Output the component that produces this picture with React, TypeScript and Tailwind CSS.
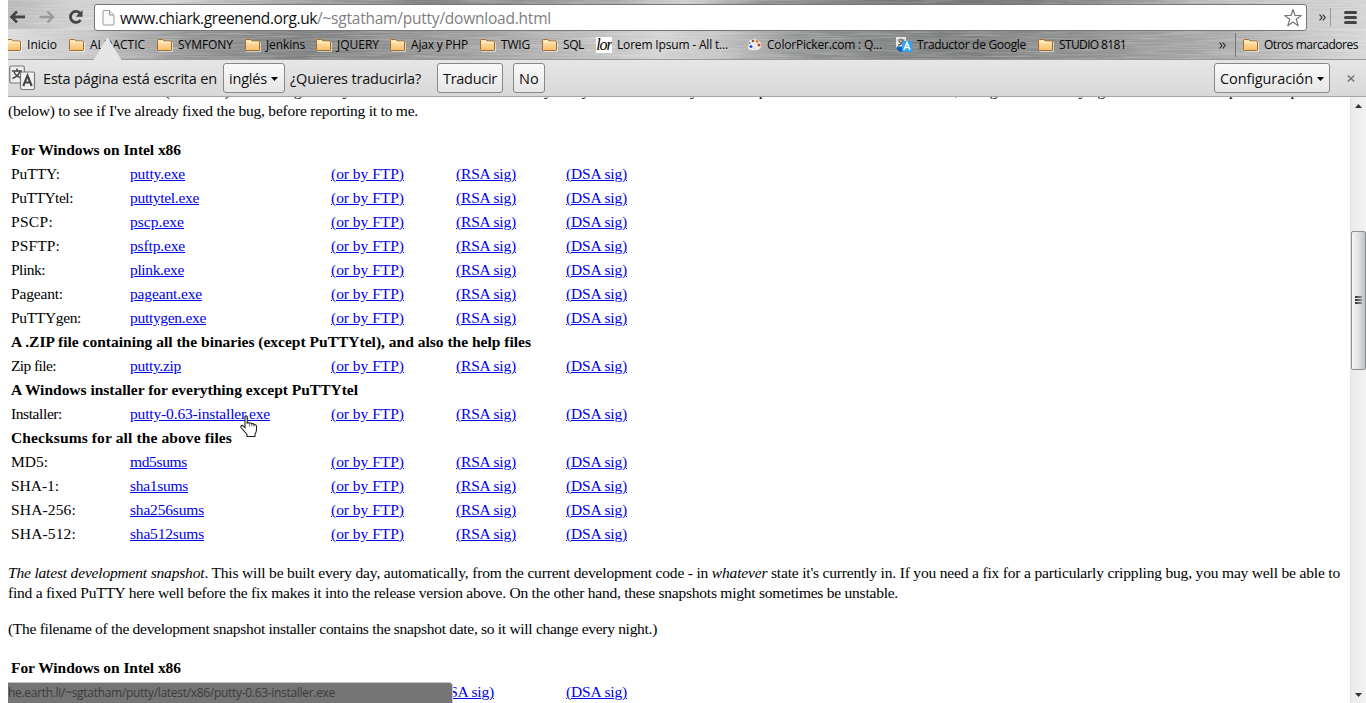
import { useLayoutEffect, useRef } from 'react';
import type { ReactNode } from 'react';

/* Spreads its text over exactly `w` pixels by adjusting the tracking. */
function Fit({ w, children, className = '' }: { w: number; children: ReactNode; className?: string }) {
  const ref = useRef<HTMLSpanElement>(null);
  useLayoutEffect(() => {
    const el = ref.current;
    if (!el) return;
    el.style.letterSpacing = '0px';
    const natural = el.getBoundingClientRect().width;
    const count = (el.textContent || '').length || 1;
    el.style.letterSpacing = `${(w - natural) / count}px`;
  }, [w]);
  return (
    <span ref={ref} className={`inline-block whitespace-pre shrink-0 ${className}`}>
      {children}
    </span>
  );
}

const UI = "font-['Open_Sans','Noto_Sans',sans-serif]";

function Metal() {
  return (
    <svg className="absolute inset-0 h-full w-full" preserveAspectRatio="none" viewBox="0 0 1358 60">
      <defs>
        <linearGradient id="sheenTop">
          <stop offset="0" stopColor="#b8b8b8" />
          <stop offset=".05" stopColor="#cfcfcf" />
          <stop offset=".11" stopColor="#d0d0d0" />
          <stop offset=".2" stopColor="#a8a8a8" />
          <stop offset=".3" stopColor="#808080" />
          <stop offset=".42" stopColor="#9a9a9a" />
          <stop offset=".5" stopColor="#cccccc" />
          <stop offset=".56" stopColor="#8c8e8d" />
          <stop offset=".7" stopColor="#6c6e6d" />
          <stop offset=".8" stopColor="#888888" />
          <stop offset=".9" stopColor="#c0c0c0" />
          <stop offset="1" stopColor="#d2d2d2" />
        </linearGradient>
        <linearGradient id="sheenBottom">
          <stop offset="0" stopColor="#dadada" />
          <stop offset=".06" stopColor="#c4c4c4" />
          <stop offset=".13" stopColor="#949494" />
          <stop offset=".22" stopColor="#7d7f7e" />
          <stop offset=".32" stopColor="#989898" />
          <stop offset=".4" stopColor="#b2b2b2" />
          <stop offset=".48" stopColor="#d2d2d2" />
          <stop offset=".52" stopColor="#c4c4c4" />
          <stop offset=".58" stopColor="#929493" />
          <stop offset=".69" stopColor="#7b7d7c" />
          <stop offset=".8" stopColor="#909090" />
          <stop offset=".9" stopColor="#ababab" />
          <stop offset="1" stopColor="#d6d6d6" />
        </linearGradient>
        <filter id="brushed" x="0" y="0" width="100%" height="100%">
          <feTurbulence type="fractalNoise" baseFrequency="0.02 0.8" numOctaves="3" seed="4" />
          <feColorMatrix values="0 0 0 0 1  0 0 0 0 1  0 0 0 0 1  1.4 0 0 0 -0.5" />
        </filter>
      </defs>
      <rect width="1358" height="30" fill="url(#sheenTop)" />
      <rect y="30" width="1358" height="30" fill="url(#sheenBottom)" />
      <rect width="1358" height="60" filter="url(#brushed)" opacity=".38" />
    </svg>
  );
}

function Folder({ cut = false }: { cut?: boolean }) {
  return (
    <svg className={cut ? 'h-4 w-[14px] shrink-0' : 'h-4 w-4 shrink-0'} viewBox={cut ? '2 0 14 16' : '0 0 16 16'}>
      <defs>
        <linearGradient id="folderFill" x2="0" y2="1">
          <stop offset="0" stopColor="#ffe9b8" />
          <stop offset="1" stopColor="#f6bf68" />
        </linearGradient>
      </defs>
      <path d="M1.5 14.500h14V5" fill="none" stroke="#fff" strokeOpacity=".55" />
      <path d="M.5 12.500V3.500q0-1 1-1h4.200q.8 0 1 .9l.2.6h6.600q1 0 1 1v7.500q0 1-1 1h-12q-1 0-1-1z" fill="url(#folderFill)" stroke="#a46b30" />
      <path d="M1.500 5.200h12" stroke="#fff4d6" />
    </svg>
  );
}

function LorIcon() {
  return (
    <span className="flex h-4 w-4 shrink-0 items-center justify-center overflow-hidden bg-white font-['Liberation_Serif',serif] text-[16px] leading-none tracking-[-1px] text-black italic">
      lor
    </span>
  );
}

function Palette() {
  return (
    <svg className="h-4 w-4 shrink-0" viewBox="0 0 16 16">
      <path d="M2 5C4 1.500 9 1 12 3c3 1.500 4 5 3 7.500-1 2.500-4 3-7 3s-6 0-6.500-2.500C1.200 9.500 3 9 2.500 8S1 6.500 2 5z" fill="#eee" stroke="#aaa" strokeWidth=".6" />
      <circle cx="7" cy="4" r="1.300" fill="#8a5230" />
      <circle cx="11" cy="4.500" r="1.400" fill="#f07a38" />
      <circle cx="13" cy="8" r="1.500" fill="#e13222" />
      <circle cx="9" cy="11" r="1.300" fill="#ddd" />
      <circle cx="5" cy="9.500" r="1.500" fill="#2d4fc8" />
      <circle cx="3.500" cy="6" r="1" fill="#777" />
    </svg>
  );
}

function TranslateFavicon() {
  return (
    <svg className="h-4 w-4 shrink-0" viewBox="0 0 16 16">
      <rect width="10" height="11" fill="#e8e8e0" />
      <path d="M1.500 3h7M5 1.500V3M7 3Q6 7 2 8.500M3 4q1.500 3 5 4" stroke="#555" strokeWidth="1.200" fill="none" />
      <path d="M.5 9.500h6V15H5q-4.500-1-4.500-5.500z" fill="#0a62c4" />
      <rect x="6" y="4" width="10" height="11" rx="1" fill="#35a4ee" />
      <path d="M8 13l3-7.500L14 13M9.200 10.500h3.600" stroke="#fff" strokeWidth="1.500" fill="none" />
    </svg>
  );
}

type Mark = { label: string; w: number; cls: string; kind?: string };
const marks: Mark[] = [
  { label: 'Inicio', w: 30, cls: 'w-[61px]', kind: 'cut' },
  { label: 'ALDACTIC', w: 55, cls: 'w-[88px]' },
  { label: 'SYMFONY', w: 55, cls: 'w-[88px]' },
  { label: 'Jenkins', w: 39, cls: 'w-[71px]' },
  { label: 'JQUERY', w: 42, cls: 'w-[74px]' },
  { label: 'Ajax y PHP', w: 57, cls: 'w-[90px]' },
  { label: 'TWIG', w: 29, cls: 'w-[62px]' },
  { label: 'SQL', w: 21, cls: 'w-[54px]' },
  { label: 'Lorem Ipsum - All t...', w: 111, cls: 'w-[150px]', kind: 'lor' },
  { label: 'ColorPicker.com : Q...', w: 115, cls: 'w-[150px]', kind: 'palette' },
  { label: 'Traductor de Google', w: 109, cls: 'w-[142px]', kind: 'translate' },
  { label: 'STUDIO 8181', w: 67, cls: 'w-[181px]' },
];

function Chevrons() {
  return (
    <svg className="h-[7px] w-[7px] shrink-0" viewBox="0 0 7 7" fill="none" stroke="#222" strokeWidth="1.100">
      <path d="M.5.5l2.500 3-2.500 3M3.700.5l2.500 3-2.500 3" />
    </svg>
  );
}

function Toolbar() {
  return (
    <div className="flex h-[34px] items-start pt-1">
      <svg className="mt-[5px] ml-px h-4 w-[86px] shrink-0" viewBox="0 0 86 16" fill="none">
        <g stroke="#fff" strokeOpacity=".5" strokeWidth="2.600" transform="translate(0 1)">
          <path d="M16 8H3M8 2.500L2.500 8 8 13.500" />
        </g>
        <path d="M16 8H3M8 2.500L2.500 8 8 13.500" stroke="#444" strokeWidth="2.800" />
        <path d="M30.500 8h13M38.500 2.500L44 8l-5.500 5.500" stroke="#999" strokeWidth="2.300" />
        <path d="M71 4.200A5.500 5.500 0 1 0 71.500 11" stroke="#444" strokeWidth="2.800" />
        <path d="M73.500 1v6.800h-6.800z" fill="#444" />
      </svg>
      <div className="-ml-px flex h-[27px] w-[1213px] shrink-0 items-center rounded-[3px] border border-[#777] bg-white">
        <svg className="ml-[7px] h-4 w-[13px] shrink-0" viewBox="0 0 13 16" fill="#fafafa" stroke="#999">
          <path d="M1 1.500q0-1 1-1h5.500l4.500 4.500v9q0 1-1 1H2q-1 0-1-1z" />
          <path d="M7.500.5V5H12" fill="#e4e4e4" />
        </svg>
        <span className="ml-[5px] flex h-[26px] text-[15.500px] leading-[26px]">
          <Fit w={197} className="text-[#111]">www.chiark.greenend.org.uk</Fit>
          <Fit w={234} className="text-[#808080]">/~sgtatham/putty/download.html</Fit>
        </span>
        <svg className="mr-[3px] ml-auto h-5 w-5" viewBox="0 0 20 20" fill="#fff" stroke="#777" strokeWidth="1.200" strokeLinejoin="round">
          <path d="M10 1.500l2 6h6.300l-5.100 3.800 2 6.400L10 14l-5.200 3.700 2-6.400L1.700 7.500H8z" />
        </svg>
      </div>
      <span className="mt-[10px] ml-[12px] flex"><Chevrons /></span>
      <span className="mt-1 ml-1 h-[18px] w-px bg-[#999]" />
      <span className="mt-[7px] ml-[13px] flex w-[13px] flex-col gap-[2px]">
        <span className="h-[3px] rounded-sm bg-[#444]" />
        <span className="h-[3px] rounded-sm bg-[#444]" />
        <span className="h-[3px] rounded-sm bg-[#444]" />
      </span>
    </div>
  );
}

function Bookmarks() {
  return (
    <div className="flex h-[22px] items-center text-[12px] text-[#050505]">
      {marks.map((m) => (
        <div key={m.label} className={`flex shrink-0 items-center gap-[5px] ${m.cls}`}>
          {m.kind === 'lor' ? <LorIcon /> : m.kind === 'palette' ? <Palette /> : m.kind === 'translate' ? <TranslateFavicon /> : <Folder cut={m.kind === 'cut'} />}
          <Fit w={m.w}>{m.label}</Fit>
        </div>
      ))}
      <Chevrons />
      <span className="ml-[9px] h-6 w-px bg-[#777]" />
      <span className="ml-[7px] flex items-center gap-[5px]">
        <Folder />
        <Fit w={94}>Otros marcadores</Fit>
      </span>
    </div>
  );
}

const btn = 'flex h-[30px] shrink-0 items-center rounded-[3px] border border-[#888] bg-linear-to-b from-[#fafafa] to-[#e6e6e6] pl-[5px]';

function Caret() {
  return (
    <svg className="mt-[2px] ml-[4px] h-1 w-[7px]" viewBox="0 0 7 4">
      <path d="M0 0h7L3.500 4z" />
    </svg>
  );
}

function InfoBar() {
  return (
    <div className="relative flex h-[38px] items-center border-t border-b border-t-[#999] border-b-[#a6a6a6] bg-linear-to-b from-[#e6e6e6] to-[#d8d8d8] text-[14.500px] text-[#111]">
      <svg className="absolute top-[-23px] left-[85px] h-6 w-[29px]" viewBox="0 0 29 24">
        <path d="M0 24L14.500 0 29 24z" fill="#e5e5e5" />
      </svg>
      <svg className="ml-px h-[26px] w-[27px] shrink-0" viewBox="0 0 27 26">
        <rect x=".8" y="1" width="14.500" height="17" rx="1.500" fill="#eee" stroke="#777" strokeWidth="1.200" />
        <path d="M3 6h10M8 3.500V6M11 6Q9.500 11 3.500 13.500M5 7q2 4.500 7.500 6" stroke="#444" strokeWidth="1.500" fill="none" />
        <rect x="11.500" y="7" width="14" height="17.500" rx="1.500" fill="#f1f1f1" stroke="#777" strokeWidth="1.200" />
        <path d="M14.300 21l4.200-10.500L22.700 21M16 17.500h5" stroke="#444" strokeWidth="2.100" fill="none" />
      </svg>
      <Fit w={174} className="ml-[7px] pt-[2px]">Esta página está escrita en</Fit>
      <div className={`${btn} ml-[6px] w-[62px]`}>
        <Fit w={38} className="pt-[2px]">inglés</Fit>
        <Caret />
      </div>
      <Fit w={131} className="ml-[5px] pt-[2px]">¿Quieres traducirla?</Fit>
      <div className={`${btn} ml-[16px] w-[66px]`}><Fit w={54} className="pt-[2px]">Traducir</Fit></div>
      <div className={`${btn} ml-[10px] w-8`}><Fit w={20} className="pt-[2px]">No</Fit></div>
      <div className={`${btn} ml-auto w-[116px]`}>
        <Fit w={93} className="pt-[2px]">Configuración</Fit>
        <Caret />
      </div>
      <svg className="mr-[11px] ml-[17px] h-[7px] w-2" viewBox="0 0 8 7" stroke="#777" strokeWidth="1.500">
        <path d="M.8.5l6.400 6M7.200.5l-6.400 6" />
      </svg>
    </div>
  );
}

function Link({ w, children }: { w: number; children: ReactNode }) {
  return <Fit w={w} className="text-[#0000ee] underline">{children}</Fit>;
}

type Row = { head: string; w: number } | { name: string; nw: number; file: string; fw: number };
const rows: Row[] = [
  { head: 'For Windows on Intel x86', w: 170 },
  { name: 'PuTTY:', nw: 49, file: 'putty.exe', fw: 55 },
  { name: 'PuTTYtel:', nw: 62, file: 'puttytel.exe', fw: 69 },
  { name: 'PSCP:', nw: 42, file: 'pscp.exe', fw: 54 },
  { name: 'PSFTP:', nw: 49, file: 'psftp.exe', fw: 55 },
  { name: 'Plink:', nw: 34, file: 'plink.exe', fw: 54 },
  { name: 'Pageant:', nw: 52, file: 'pageant.exe', fw: 72 },
  { name: 'PuTTYgen:', nw: 70, file: 'puttygen.exe', fw: 76 },
  { head: 'A .ZIP file containing all the binaries (except PuTTYtel), and also the help files', w: 520 },
  { name: 'Zip file:', nw: 45, file: 'putty.zip', fw: 51 },
  { head: 'A Windows installer for everything except PuTTYtel', w: 347 },
  { name: 'Installer:', nw: 51, file: 'putty-0.63-installer.exe', fw: 140 },
  { head: 'Checksums for all the above files', w: 221 },
  { name: 'MD5:', nw: 37, file: 'md5sums', fw: 57 },
  { name: 'SHA-1:', nw: 48, file: 'sha1sums', fw: 58 },
  { name: 'SHA-256:', nw: 65, file: 'sha256sums', fw: 74 },
  { name: 'SHA-512:', nw: 65, file: 'sha512sums', fw: 74 },
];

function FileRow({ row }: { row: Row }) {
  if ('head' in row) {
    return <div className="h-6 pl-[3px] leading-6 font-bold"><Fit w={row.w}>{row.head}</Fit></div>;
  }
  return (
    <div className="grid h-6 grid-cols-[119px_201px_125px_110px_100px] pl-[3px] leading-6">
      <span><Fit w={row.nw}>{row.name}</Fit></span>
      <span><Link w={row.fw}>{row.file}</Link></span>
      <span><Link w={73}>(or by FTP)</Link></span>
      <span><Link w={60}>(RSA sig)</Link></span>
      <span><Link w={61}>(DSA sig)</Link></span>
    </div>
  );
}

function Line({ w, children }: { w: number; children: ReactNode }) {
  return <div className="h-5 leading-5"><Fit w={w}>{children}</Fit></div>;
}

function ScrollBar() {
  return (
    <div className="flex w-4 shrink-0 flex-col items-center border-l border-[#e2e2e2] bg-linear-to-r from-[#ebebeb] to-[#f2f2f2]">
      <svg className="mt-[7px] h-1 w-[7px] shrink-0" viewBox="0 0 7 4"><path d="M0 4h7L3.500 0z" fill="#333" /></svg>
      <div className="mt-[123px] -ml-px flex h-[139px] w-[15px] shrink-0 flex-col items-center justify-center gap-px rounded-[2px] border border-[#8f8f8f] bg-linear-to-r from-[#f5f5f5] via-[#e2e2e4] to-[#bfc0c4] pb-[2px]">
        <span className="h-[2px] w-[7px] bg-linear-to-r from-[#333] to-[#999]" />
        <span className="h-[2px] w-[7px] bg-linear-to-r from-[#333] to-[#999]" />
        <span className="h-[2px] w-[7px] bg-linear-to-r from-[#333] to-[#999]" />
      </div>
      <svg className="mt-auto mb-[6px] h-1 w-[7px] shrink-0" viewBox="0 0 7 4"><path d="M0 0h7L3.500 4z" fill="#333" /></svg>
    </div>
  );
}

export default function App() {
  return (
    <div className="relative flex h-[703px] w-[1366px] flex-col overflow-hidden bg-white pl-2">
      <header className={`relative z-10 shrink-0 ${UI}`}>
        <div className="relative h-[59px]">
          <Metal />
          <div className="relative">
            <Toolbar />
            <Bookmarks />
          </div>
        </div>
        <InfoBar />
      </header>
      <div className="flex min-h-0 flex-1">
        <main className="min-w-0 flex-1 overflow-hidden font-['Liberation_Serif',serif] text-[15.500px] text-black">
          <div className="-mt-[16px]">
            <Line w={1315}>
              <i>The latest release version</i> (beta 0.63). This will generally be a version I think is reasonably likely to work well. If you have a problem with the release version, it might be worth trying out the latest development snapshot
            </Line>
            <Line w={410}>(below) to see if I've already fixed the bug, before reporting it to me.</Line>
          </div>
          <section className="mt-[17px]">
            {rows.map((row, i) => <FileRow key={i} row={row} />)}
          </section>
          <div className="mt-[17px]">
            <Line w={1332}>
              <i>The latest development snapshot</i>. This will be built every day, automatically, from the current development code - in <i>whatever</i> state it's currently in. If you need a fix for a particularly crippling bug, you may well be able to
            </Line>
            <Line w={890}>find a fixed PuTTY here well before the fix makes it into the release version above. On the other hand, these snapshots might sometimes be unstable.</Line>
          </div>
          <div className="mt-4">
            <Line w={649}>(The filename of the development snapshot installer contains the snapshot date, so it will change every night.)</Line>
          </div>
          <section className="mt-[17px]">
            <FileRow row={rows[0]} />
            <div className="grid h-6 grid-cols-[423px_132px_100px] pl-[3px] leading-6">
              <span />
              <span><Link w={60}>(RSA sig)</Link></span>
              <span><Link w={61}>(DSA sig)</Link></span>
            </div>
          </section>
        </main>
        <ScrollBar />
      </div>
      <div className={`absolute bottom-0 left-2 h-[21px] w-[445px] overflow-hidden rounded-tr-[4px] border-t border-r border-[#c4c9c6] bg-[#757575] text-[12px] leading-[20px] text-[#3c3c3c] ${UI}`}>
        <Fit w={327}>he.earth.li/~sgtatham/putty/latest/x86/putty-0.63-installer.exe</Fit>
      </div>
      <svg className="absolute top-[415px] left-[240px] h-[23px] w-[18px]" viewBox="0 0 18 23">
        <path d="M5 1.500Q6.200.3 7.200 1.500V8q1.300-1 2.300.3 1.400-.8 2.300.5 1.500-.6 2.200.8 2-.3 2.500 1.500V15q0 2-1.500 4v2.500H7V19.500L1 12.500Q.3 10.500 2.200 10.300L5 12.500z" fill="#fff" stroke="#222" strokeWidth="1.100" />
        <path d="M9.500 8.500v3M11.800 9v2.500M14 9.700v2" stroke="#555" strokeWidth=".8" />
      </svg>
    </div>
  );
}
